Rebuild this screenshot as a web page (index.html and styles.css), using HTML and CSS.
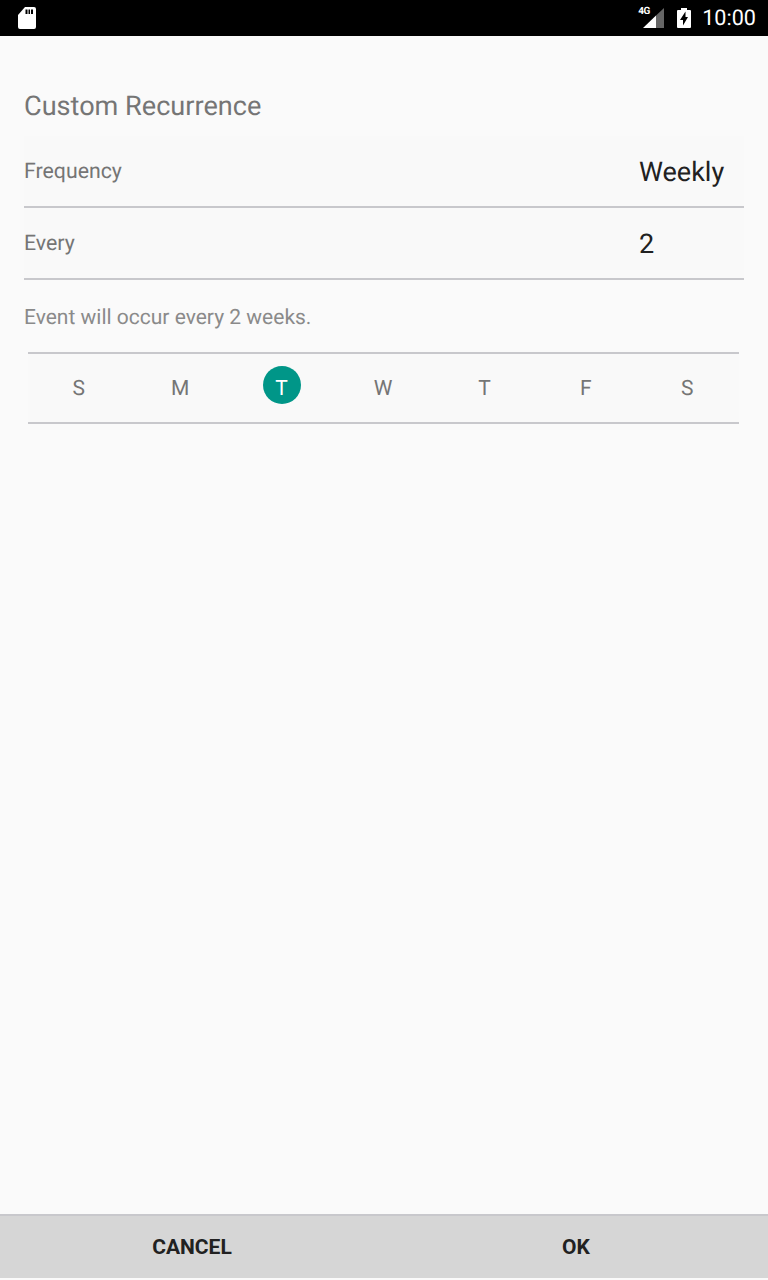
FILE: index.html
```html
<!DOCTYPE html>
<html lang="en">

<head>
	<meta charset="UTF-8">
	<meta name="viewport" content="width=device-width, initial-scale=1.0">
	<title>Custom Recurrence</title>
	<link rel="stylesheet" href="styles.css">
</head>

<body>
	<div class="statusbar">
		<svg class="sd" width="18" height="22" viewBox="0 0 18 22">
			<path fill="#fff" fill-rule="evenodd" d="M7 0H16A2 2 0 0 1 18 2V20A2 2 0 0 1 16 22H2A2 2 0 0 1 0 20V8ZM7.500 2.500V7H9.500V2.500ZM10.500 2.500V7H12V2.500ZM13 2.500V7H15V2.500Z" />
		</svg>
		<div class="status-right">
			<div class="signal">
				<span class="net">4G</span>
				<svg width="21" height="20" viewBox="0 0 21 20">
					<path fill="#666" d="M21 0V20H13V7.600Z" />
					<path fill="#fff" d="M13 7.600V20H0Z" />
				</svg>
			</div>
			<svg class="battery" width="14" height="20" viewBox="0 0 14 20">
				<path fill="#fff" fill-rule="evenodd" d="M4 0H10V2H13A1 1 0 0 1 14 3V19A1 1 0 0 1 13 20H1A1 1 0 0 1 0 19V3A1 1 0 0 1 1 2H4ZM8.500 3.500L3 12H6V17.500L11 9H8.500Z" />
			</svg>
			<span class="clock">10:00</span>
		</div>
	</div>

	<div class="content">
		<h1 class="title">Custom Recurrence</h1>
		<div class="row">
			<span class="label">Frequency</span>
			<span class="value">Weekly</span>
		</div>
		<div class="row">
			<span class="label">Every</span>
			<span class="value">2</span>
		</div>
		<p class="hint">Event will occur every 2 weeks.</p>
		<div class="days">
			<div class="day">S</div>
			<div class="day">M</div>
			<div class="day on">T</div>
			<div class="day">W</div>
			<div class="day">T</div>
			<div class="day">F</div>
			<div class="day">S</div>
		</div>
	</div>

	<div class="actions">
		<button class="btn">CANCEL</button>
		<button class="btn">OK</button>
	</div>
</body>

</html>
```

FILE: styles.css
```css
* {
	box-sizing: border-box;
}

body {
	margin: 0;
	height: 1280px;
	overflow: hidden;
	display: flex;
	flex-direction: column;
	background-color: #fafafa;
	font-family: Roboto, sans-serif;
	text-rendering: geometricPrecision;
}

.statusbar {
	height: 36px;
	background-color: #000;
	color: #fff;
	display: flex;
	align-items: center;
	justify-content: space-between;
	padding: 0 12px 0 18px;
}

.status-right {
	display: flex;
	align-items: center;
}

.signal {
	position: relative;
	width: 21px;
	height: 20px;
	margin: 0 13px 0 0;
}

.net {
	position: absolute;
	left: -5px;
	top: -2px;
	font-size: 10px;
	font-weight: 700;
	line-height: 12px;
	letter-spacing: -0.5px;
}

.signal svg {
	display: block;
}

.battery {
	margin: -1px 11px 0 0;
}

.clock {
	margin-top: 2px;
	font-size: 21.6px;
	line-height: 34px;
}

.content {
	flex: 1;
	padding: 0 24px;
}

.title {
	margin: 0;
	height: 100px;
	padding-top: 52px;
	font-size: 27.100px;
	font-weight: 400;
	line-height: 36px;
	color: #757575;
}

.row {
	height: 72px;
	padding-top: 1px;
	display: flex;
	align-items: center;
	justify-content: space-between;
	background-color: #f9f9f9;
	border-bottom: 2px solid #c8c8cc;
}

.label {
	font-size: 21.3px;
	color: #757575;
}

.value {
	width: 105px;
	font-size: 27px;
	color: #212121;
}

.hint {
	margin: 0;
	height: 72px;
	font-size: 21px;
	line-height: 76px;
	color: #8a8a8a;
}

.days {
	margin: 0 5px 0 4px;
	height: 72px;
	padding-right: 1px;
	display: grid;
	grid-template-columns: repeat(7, 1fr);
	background-color: #f9f9f9;
	border-top: 2px solid #c8c8cc;
	border-bottom: 2px solid #c8c8cc;
}

.day {
	position: relative;
	display: flex;
	align-items: center;
	justify-content: center;
	padding-top: 2px;
	font-size: 21px;
	color: #757575;
}

/* selected circle sits behind the letter */
.day.on {
	color: #fff;
	z-index: 0;
}

.day.on::before {
	content: "";
	position: absolute;
	left: 50%;
	top: 12px;
	width: 38px;
	height: 38px;
	margin-left: -19px;
	border-radius: 50%;
	background-color: #009688;
	z-index: -1;
}

.actions {
	height: 64px;
	margin-bottom: 2px;
	display: flex;
	background-color: #d6d6d6;
	border-top: 2px solid #c8c8cc;
}

.btn {
	flex: 1;
	border: 0;
	padding: 0;
	background: none;
	font-family: inherit;
	font-size: 21px;
	font-weight: 700;
	color: #212121;
}
```
